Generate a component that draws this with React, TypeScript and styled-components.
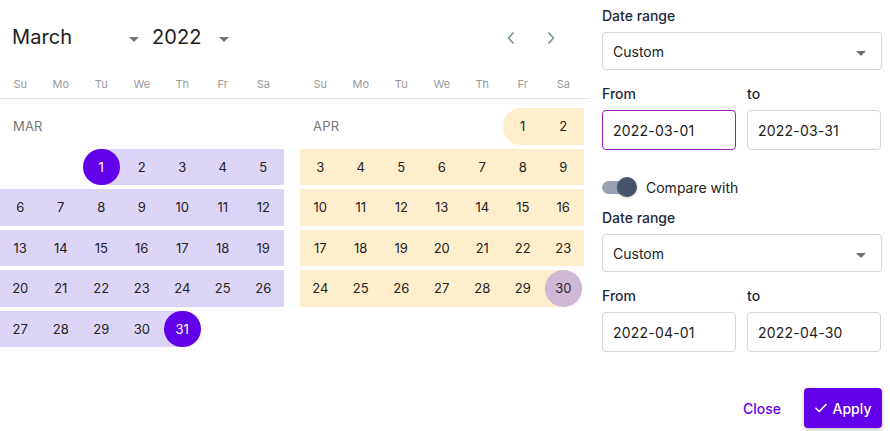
import React from "react";
import styled, { createGlobalStyle, css } from "styled-components";

const GlobalStyle = createGlobalStyle`
  html, body { margin: 0; padding: 0; background: #ffffff; }
  body { font-family: Inter, "Noto Sans", Roboto, sans-serif; color: #212121; }
  * { box-sizing: border-box; }
`;

const PURPLE = "#6200ea";
const LAVENDER = "#ddd5f8";
const CREAM = "#feeecb";
const MAUVE = "#cfb8d6";

const Layout = styled.div`
  display: flex;
  width: 890px;
  height: 431px;
`;

const CalendarSection = styled.section`
  width: 590px;
  display: flex;
  flex-direction: column;
`;

const Header = styled.div`
  height: 74px;
  display: flex;
  align-items: center;
  padding: 0 0 0 12px;
`;

const MonthSelect = styled.div<{ $width: number; $gap?: number }>`
  width: ${(p) => p.$width}px;
  margin-left: ${(p) => p.$gap ?? 0}px;
  display: flex;
  align-items: center;
  justify-content: space-between;
  font-size: 20px;
  color: #212121;
  letter-spacing: 0.1px;
`;

const Caret = styled.span<{ $color?: string }>`
  width: 0;
  height: 0;
  border-left: 5px solid transparent;
  border-right: 5px solid transparent;
  border-top: 5px solid ${(p) => p.$color ?? "#757575"};
  margin-top: 5px;
`;

const Spacer = styled.div`
  flex: 1;
`;

const NavGroup = styled.div`
  display: flex;
  gap: 20px;
  margin-right: 29px;
  margin-top: 2px;
`;

const NavButton = styled.button`
  width: 20px;
  height: 24px;
  padding: 0;
  border: none;
  background: none;
  display: flex;
  align-items: center;
  justify-content: center;
  color: #7d9696;
`;

const WeekdayBar = styled.div`
  display: flex;
  gap: 16.5px;
  height: 25px;
  border-bottom: 1px solid #e3e3e3;
`;

const WeekdayGrid = styled.div`
  display: grid;
  grid-template-columns: repeat(7, 40.5px);
  height: 20px;
`;

const Weekday = styled.span`
  font-size: 11px;
  color: #9a9a9a;
  text-align: center;
  line-height: 20px;
`;

const Months = styled.div`
  display: flex;
  gap: 16.5px;
  padding-top: 9px;
`;

const MonthGrid = styled.div`
  display: grid;
  grid-template-columns: repeat(7, 40.5px);
  grid-auto-rows: 36.5px;
  row-gap: 4px;
`;

const MonthLabel = styled.div<{ $span: number }>`
  grid-column: span ${(p) => p.$span};
  display: flex;
  align-items: center;
  padding-left: 13px;
  font-size: 13px;
  color: #777777;
  letter-spacing: 0.2px;
`;

type Range = "none" | "in" | "start" | "end" | "pillStart";

const DayCell = styled.div<{ $range: Range; $tone: string }>`
  display: flex;
  align-items: center;
  justify-content: center;
  font-size: 13px;
  color: #222222;
  ${(p) =>
    p.$range === "in" &&
    css`
      background: ${p.$tone};
    `}
  ${(p) =>
    p.$range === "start" &&
    css`
      background: linear-gradient(to right, transparent 50%, ${p.$tone} 50%);
    `}
  ${(p) =>
    p.$range === "end" &&
    css`
      background: linear-gradient(to right, ${p.$tone} 50%, transparent 50%);
    `}
  ${(p) =>
    p.$range === "pillStart" &&
    css`
      background: ${p.$tone};
      border-radius: 18px 0 0 18px;
    `}
`;

const DayCircle = styled.span<{ $bg: string; $fg: string }>`
  width: 36.5px;
  height: 36.5px;
  border-radius: 50%;
  background: ${(p) => p.$bg};
  color: ${(p) => p.$fg};
  display: flex;
  align-items: center;
  justify-content: center;
`;

const Panel = styled.aside`
  width: 280px;
  margin-left: 12px;
  display: flex;
  flex-direction: column;
`;

const FieldLabel = styled.div<{ $top: number }>`
  font-size: 14px;
  font-weight: 500;
  color: #1e293b;
  margin-top: ${(p) => p.$top}px;
  height: 17px;
  line-height: 17px;
`;

const SelectBox = styled.div<{ $top: number }>`
  margin-top: ${(p) => p.$top}px;
  height: 38px;
  border: 1px solid #d6d6d6;
  border-radius: 4px;
  display: flex;
  align-items: center;
  justify-content: space-between;
  padding: 0 15px 0 10px;
  font-size: 14px;
  color: #222222;
`;

const DateRow = styled.div`
  display: grid;
  grid-template-columns: 134px 134px;
  column-gap: 11px;
`;

const DateInput = styled.div<{ $active?: boolean }>`
  margin-top: 8px;
  height: 40px;
  border: 1px solid ${(p) => (p.$active ? "#9c1fb5" : "#d6d6d6")};
  border-radius: 4px;
  display: flex;
  align-items: center;
  padding-left: 10px;
  font-size: 14px;
  color: #222222;
  letter-spacing: 0.2px;
`;

const ToggleRow = styled.div`
  margin-top: 26px;
  height: 22px;
  display: flex;
  align-items: center;
  gap: 7px;
  font-size: 14px;
  color: #222222;
`;

const Toggle = styled.span`
  position: relative;
  width: 37px;
  height: 22px;
  display: block;
`;

const Track = styled.span`
  position: absolute;
  left: 0;
  top: 5px;
  width: 33px;
  height: 13px;
  border-radius: 7px;
  background: #9aa1b0;
`;

const Knob = styled.span`
  position: absolute;
  left: 15px;
  top: 1px;
  width: 20px;
  height: 20px;
  border-radius: 50%;
  background: #46536d;
  box-shadow: 0 1px 2px rgba(0, 0, 0, 0.25);
`;

const Actions = styled.div`
  margin-top: auto;
  margin-bottom: 3px;
  display: flex;
  justify-content: flex-end;
  align-items: center;
  gap: 23px;
`;

const TextButton = styled.button`
  border: none;
  background: none;
  padding: 0;
  font-family: inherit;
  font-size: 14px;
  font-weight: 500;
  color: ${PURPLE};
`;

const PrimaryButton = styled.button`
  height: 40px;
  width: 78px;
  border: none;
  border-radius: 4px;
  background: ${PURPLE};
  color: #ffffff;
  font-family: inherit;
  font-size: 14px;
  font-weight: 500;
  display: flex;
  align-items: center;
  justify-content: center;
  gap: 6px;
  box-shadow: 0 2px 4px rgba(0, 0, 0, 0.25);
`;

const WEEKDAYS = ["Su", "Mo", "Tu", "We", "Th", "Fr", "Sa"];

type Day = { n: number; range: Range; circle?: { bg: string; fg: string } };

function buildMonth(
  firstCol: number,
  days: number,
  startInRow0: boolean,
  startStyle: "circle" | "pill",
  endCircle: { bg: string; fg: string },
  startCircle?: { bg: string; fg: string }
) {
  const items: Day[] = [];
  for (let n = 1; n <= days; n++) {
    let range: Range = "in";
    let circle: Day["circle"];
    if (n === 1) {
      range = startStyle === "pill" ? "pillStart" : "start";
      circle = startCircle;
    } else if (n === days) {
      range = "end";
      circle = endCircle;
    }
    items.push({ n, range, circle });
  }
  return { firstCol, items, startInRow0 };
}

const Month: React.FC<{
  label: string;
  firstCol: number;
  items: Day[];
  startInRow0: boolean;
  tone: string;
}> = ({ label, firstCol, items, startInRow0, tone }) => {
  const cells: React.ReactNode[] = [];
  cells.push(
    <MonthLabel key="label" $span={startInRow0 ? firstCol : 7}>
      {label}
    </MonthLabel>
  );
  if (!startInRow0) {
    for (let i = 0; i < firstCol; i++) {
      cells.push(<DayCell key={`e${i}`} $range="none" $tone={tone} />);
    }
  }
  items.forEach((d) => {
    cells.push(
      <DayCell key={d.n} $range={d.range} $tone={tone}>
        {d.circle ? (
          <DayCircle $bg={d.circle.bg} $fg={d.circle.fg}>
            {d.n}
          </DayCircle>
        ) : (
          d.n
        )}
      </DayCell>
    );
  });
  return <MonthGrid>{cells}</MonthGrid>;
};

const ChevronLeft = () => (
  <svg width="10" height="14" viewBox="0 0 10 14" fill="none">
    <path d="M7 2 2.5 7 7 12" stroke="currentColor" strokeWidth="1.8" strokeLinecap="round" strokeLinejoin="round" />
  </svg>
);

const ChevronRight = () => (
  <svg width="10" height="14" viewBox="0 0 10 14" fill="none">
    <path d="M3 2 7.5 7 3 12" stroke="currentColor" strokeWidth="1.8" strokeLinecap="round" strokeLinejoin="round" />
  </svg>
);

const CheckIcon = () => (
  <svg width="12" height="10" viewBox="0 0 12 10" fill="none">
    <path d="M1 5.2 4.3 8.5 11 1.5" stroke="currentColor" strokeWidth="1.6" strokeLinecap="round" strokeLinejoin="round" />
  </svg>
);

export default function App() {
  const march = buildMonth(
    2,
    31,
    false,
    "circle",
    { bg: PURPLE, fg: "#ffffff" },
    { bg: PURPLE, fg: "#ffffff" }
  );
  const april = buildMonth(5, 30, true, "pill", { bg: MAUVE, fg: "#2a2a2a" });

  return (
    <>
      <GlobalStyle />
      <Layout>
        <CalendarSection>
          <Header>
            <MonthSelect $width={127}>
              <span>March</span>
              <Caret />
            </MonthSelect>
            <MonthSelect $width={77} $gap={13}>
              <span>2022</span>
              <Caret />
            </MonthSelect>
            <Spacer />
            <NavGroup>
              <NavButton aria-label="Previous month">
                <ChevronLeft />
              </NavButton>
              <NavButton aria-label="Next month">
                <ChevronRight />
              </NavButton>
            </NavGroup>
          </Header>
          <WeekdayBar>
            {[0, 1].map((k) => (
              <WeekdayGrid key={k}>
                {WEEKDAYS.map((w) => (
                  <Weekday key={w}>{w}</Weekday>
                ))}
              </WeekdayGrid>
            ))}
          </WeekdayBar>
          <Months>
            <Month label="MAR" tone={LAVENDER} {...march} />
            <Month label="APR" tone={CREAM} {...april} />
          </Months>
        </CalendarSection>
        <Panel>
          <FieldLabel $top={7}>Date range</FieldLabel>
          <SelectBox $top={8}>
            <span>Custom</span>
            <Caret $color="#6f6f6f" />
          </SelectBox>
          <DateRow>
            <FieldLabel $top={15}>From</FieldLabel>
            <FieldLabel $top={15}>to</FieldLabel>
            <DateInput $active>2022-03-01</DateInput>
            <DateInput>2022-03-31</DateInput>
          </DateRow>
          <ToggleRow>
            <Toggle>
              <Track />
              <Knob />
            </Toggle>
            <span>Compare with</span>
          </ToggleRow>
          <FieldLabel $top={11}>Date range</FieldLabel>
          <SelectBox $top={8}>
            <span>Custom</span>
            <Caret $color="#6f6f6f" />
          </SelectBox>
          <DateRow>
            <FieldLabel $top={15}>From</FieldLabel>
            <FieldLabel $top={15}>to</FieldLabel>
            <DateInput>2022-04-01</DateInput>
            <DateInput>2022-04-30</DateInput>
          </DateRow>
          <Actions>
            <TextButton>Close</TextButton>
            <PrimaryButton>
              <CheckIcon />
              Apply
            </PrimaryButton>
          </Actions>
        </Panel>
      </Layout>
    </>
  );
}
